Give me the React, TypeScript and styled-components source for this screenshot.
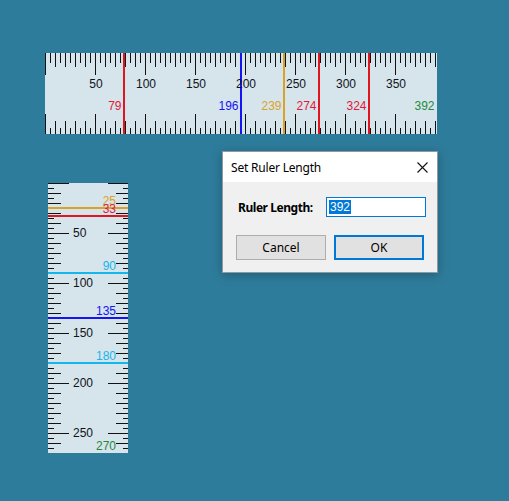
import React from "react";
import styled, { createGlobalStyle } from "styled-components";

const Global = createGlobalStyle`
  html, body { margin: 0; padding: 0; background: #2e7c9b; }
  #root { width: 509px; height: 501px; }
`;

const Desktop = styled.div`
  position: relative;
  width: 509px;
  height: 501px;
  background: #2e7c9b;
  overflow: hidden;
  font-family: "Liberation Sans", Arial, sans-serif;
`;

const RulerWindow = styled.div<{ $x: number; $y: number; $w: number; $h: number }>`
  position: absolute;
  left: ${(p) => p.$x}px;
  top: ${(p) => p.$y}px;
  width: ${(p) => p.$w}px;
  height: ${(p) => p.$h}px;
  background: #d6e4eb;
  overflow: hidden;
`;

const TickLayer = styled.svg`
  position: absolute;
  left: 0;
  top: 0;
  display: block;
  shape-rendering: crispEdges;
`;

const ScaleLabel = styled.span<{ $vertical?: boolean }>`
  position: absolute;
  font-size: 12px;
  line-height: 14px;
  color: #10131c;
  white-space: nowrap;
  transform: ${(p) => (p.$vertical ? "none" : "translateX(-50%)")};
`;

const MarkLabel = styled.span<{ $color: string }>`
  position: absolute;
  font-size: 12px;
  line-height: 14px;
  color: ${(p) => p.$color};
  white-space: nowrap;
`;

type Mark = { v: number; line?: string; text: string };

const RED = "#e0151e";
const RED_T = "#e3183a";
const BLUE = "#1414f5";
const GOLD = "#dca225";
const SKY = "#16b6ec";
const GREEN = "#1f8a3b";

const hMarks: Mark[] = [
  { v: 79, line: RED, text: RED_T },
  { v: 196, line: BLUE, text: BLUE },
  { v: 239, line: GOLD, text: GOLD },
  { v: 274, line: RED, text: RED_T },
  { v: 324, line: RED, text: RED_T },
  { v: 392, text: GREEN },
];

const vMarks: Mark[] = [
  { v: 25, line: GOLD, text: GOLD },
  { v: 33, line: RED, text: RED_T },
  { v: 90, line: SKY, text: SKY },
  { v: 135, line: BLUE, text: BLUE },
  { v: 180, line: SKY, text: SKY },
  { v: 270, text: GREEN },
];

const tickLen = (v: number, s: number, m: number, l: number) =>
  v % 50 === 0 ? l : v % 10 === 0 ? m : s;

function HRuler({ x, y, length, thickness }: { x: number; y: number; length: number; thickness: number }) {
  const ticks: number[] = [];
  for (let v = 0; v < length; v += 5) ticks.push(v);
  return (
    <RulerWindow $x={x} $y={y} $w={length} $h={thickness}>
      <TickLayer width={length} height={thickness}>
        {ticks.map((v) => (
          <rect key={"t" + v} x={v} y={0} width={1} height={tickLen(v, 10, 14, 22)} fill="#111" />
        ))}
        {ticks.map((v) => {
          const h = tickLen(v, 6, 13, 20);
          return <rect key={"b" + v} x={v} y={thickness - h} width={1} height={h} fill="#111" />;
        })}
        {hMarks
          .filter((m) => m.line)
          .map((m) => (
            <rect key={"l" + m.v} x={m.v - 1} y={0} width={2} height={thickness} fill={m.line} />
          ))}
      </TickLayer>
      {ticks
        .filter((v) => v > 0 && v % 50 === 0)
        .map((v) => (
          <ScaleLabel key={v} style={{ left: v + 1, top: 24 }}>
            {v}
          </ScaleLabel>
        ))}
      {hMarks.map((m) => (
        <MarkLabel key={m.v} $color={m.text} style={{ right: length - m.v + 2.5, top: 45.5 }}>
          {m.v}
        </MarkLabel>
      ))}
    </RulerWindow>
  );
}

function VRuler({ x, y, length, thickness }: { x: number; y: number; length: number; thickness: number }) {
  const ticks: number[] = [];
  for (let v = 0; v < length; v += 5) ticks.push(v);
  return (
    <RulerWindow $x={x} $y={y} $w={thickness} $h={length}>
      <TickLayer width={thickness} height={length}>
        {ticks.map((v) => (
          <rect key={"a" + v} x={0} y={v} width={tickLen(v, 6, 13, 21)} height={1} fill="#111" />
        ))}
        {ticks.map((v) => {
          const w = tickLen(v, 5, 12, 20);
          return <rect key={"b" + v} x={thickness - w} y={v} width={w} height={1} fill="#111" />;
        })}
        {vMarks
          .filter((m) => m.line)
          .map((m) => (
            <rect key={"l" + m.v} x={0} y={m.v - 1} width={thickness} height={2} fill={m.line} />
          ))}
      </TickLayer>
      {ticks
        .filter((v) => v > 0 && v % 50 === 0)
        .map((v) => (
          <ScaleLabel key={v} $vertical style={{ left: 25, top: v - 7 }}>
            {v}
          </ScaleLabel>
        ))}
      {vMarks.map((m) => (
        <MarkLabel key={m.v} $color={m.text} style={{ right: 12, top: m.v - 14 }}>
          {m.v}
        </MarkLabel>
      ))}
    </RulerWindow>
  );
}

const Dialog = styled.div`
  position: absolute;
  left: 222px;
  top: 151px;
  width: 214px;
  height: 120px;
  border: 1px solid #8e9aa3;
  background: #f0f0f0;
  box-shadow: 0 2px 10px rgba(0, 0, 0, 0.25);
  display: flex;
  flex-direction: column;
  font-family: "Noto Sans", "Open Sans", sans-serif;
  color: #000;
`;

const TitleBar = styled.div`
  height: 30px;
  background: #ffffff;
  display: flex;
  align-items: center;
  justify-content: space-between;
  padding: 0 9px 0 8px;
`;

const Title = styled.span`
  font-size: 12px;
  letter-spacing: -0.2px;
  color: #000;
`;

const CloseButton = styled.div`
  width: 12px;
  height: 12px;
  display: flex;
  align-items: center;
  justify-content: center;
`;

const Body = styled.div`
  flex: 1;
  display: flex;
  flex-direction: column;
  padding: 15px 11px 0 13px;
  gap: 18px;
`;

const FieldRow = styled.div`
  display: flex;
  align-items: center;
  justify-content: space-between;
  padding-left: 2px;
`;

const FieldLabel = styled.span`
  font-size: 12px;
  font-weight: 700;
  letter-spacing: -0.45px;
`;

const Input = styled.div`
  box-sizing: border-box;
  width: 100px;
  height: 20px;
  border: 1px solid #0078d7;
  background: #fff;
  display: flex;
  align-items: center;
  padding-left: 2px;
`;

const Selected = styled.span`
  background: #0078d7;
  color: #fff;
  font-family: "Liberation Sans", Arial, sans-serif;
  font-size: 12px;
  line-height: 14px;
  padding: 0 1px;
`;

const ButtonRow = styled.div`
  display: flex;
  gap: 8px;
`;

const Button = styled.div<{ $default?: boolean }>`
  box-sizing: border-box;
  width: 90px;
  height: 25px;
  background: #e1e1e1;
  border: ${(p) => (p.$default ? "2px solid #0078d7" : "1px solid #adadad")};
  display: flex;
  align-items: center;
  justify-content: center;
  font-size: 12px;
`;

export default function App() {
  return (
    <>
      <Global />
      <Desktop>
        <HRuler x={45} y={53} length={392} thickness={81} />
        <VRuler x={48} y={183} length={270} thickness={80} />
        <Dialog>
          <TitleBar>
            <Title>Set Ruler Length</Title>
            <CloseButton>
              <svg width="11" height="11" viewBox="0 0 11 11">
                <path d="M0.5 0.5 L10.5 10.5 M10.5 0.5 L0.5 10.5" stroke="#111" strokeWidth="1.1" />
              </svg>
            </CloseButton>
          </TitleBar>
          <Body>
            <FieldRow>
              <FieldLabel>Ruler Length:</FieldLabel>
              <Input>
                <Selected>392</Selected>
              </Input>
            </FieldRow>
            <ButtonRow>
              <Button>Cancel</Button>
              <Button $default>OK</Button>
            </ButtonRow>
          </Body>
        </Dialog>
      </Desktop>
    </>
  );
}
